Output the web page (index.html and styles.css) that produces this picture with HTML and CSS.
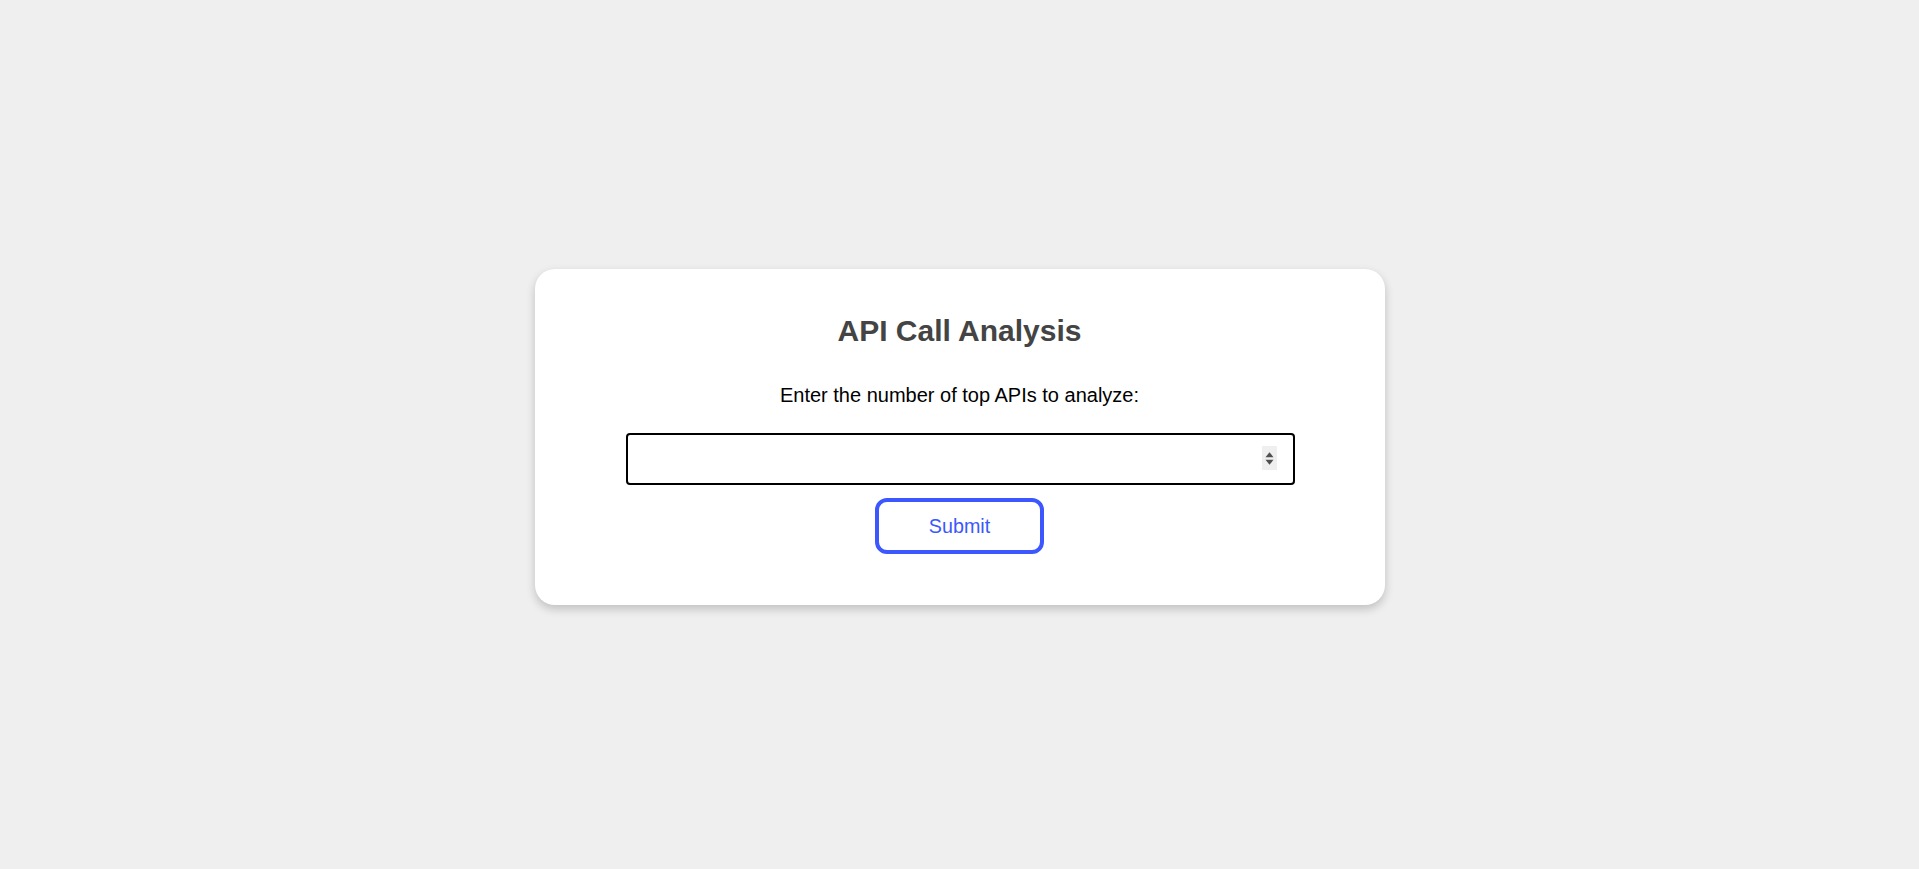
FILE: index.html
```html
<!DOCTYPE html>
<html lang="en">
<head>
<meta charset="utf-8">
<title>API Call Analysis</title>
<link rel="stylesheet" href="styles.css">
</head>
<body>
<main class="page">
  <form class="card" onsubmit="return false;">
    <h1 class="title">API Call Analysis</h1>
    <label class="label" for="topN">Enter the number of top APIs to analyze:</label>
    <div class="input-wrap">
      <input class="number-input" id="topN" type="number" min="1">
      <span class="spinner" aria-hidden="true">
        <svg width="15" height="24" viewBox="0 0 15 24">
          <path d="M3.5 11.2 L11.5 11.2 L7.5 6.2 Z" fill="#4f4f4f"/>
          <path d="M3.5 13.8 L11.5 13.8 L7.5 18.8 Z" fill="#4f4f4f"/>
        </svg>
      </span>
    </div>
    <button class="submit-btn" type="submit">Submit</button>
  </form>
</main>
</body>
</html>
```

FILE: styles.css
```css
html, body {
  margin: 0;
  padding: 0;
}

body {
  background: #efefef;
  font-family: "Liberation Sans", Arial, sans-serif;
}

.page {
  box-sizing: border-box;
  min-height: 869px;
  height: 100vh;
  padding-top: 5px;
  display: flex;
  align-items: center;
  justify-content: center;
}

.card {
  box-sizing: border-box;
  width: 850px;
  padding: 44px 40px 51px;
  background: #ffffff;
  border-radius: 20px;
  box-shadow: 0 4px 10px rgba(0, 0, 0, 0.2);
  display: flex;
  flex-direction: column;
  align-items: center;
}

.title {
  margin: 0 0 36px;
  font-size: 30px;
  line-height: 35px;
  font-weight: bold;
  color: #444444;
}

.label {
  display: block;
  margin: 0 0 26px;
  font-size: 20px;
  line-height: 23px;
  color: #000000;
}

.input-wrap {
  position: relative;
  width: 669px;
  height: 52px;
  margin-left: 2px;
}

.number-input {
  box-sizing: border-box;
  display: block;
  width: 100%;
  height: 52px;
  padding: 12px 36px 12px 12px;
  border: 2px solid #000000;
  border-radius: 4px;
  background: #ffffff;
  font-family: "Liberation Sans", Arial, sans-serif;
  font-size: 20px;
  outline: none;
  -moz-appearance: textfield;
}

.number-input::-webkit-inner-spin-button,
.number-input::-webkit-outer-spin-button {
  -webkit-appearance: none;
  margin: 0;
}

.spinner {
  position: absolute;
  top: 13px;
  right: 18px;
  width: 15px;
  height: 24px;
  background: #efefef;
  display: block;
  pointer-events: none;
}

.spinner svg {
  display: block;
}

.submit-btn {
  margin-top: 13px;
  padding: 12px 50px;
  border: 4px solid #3b57fd;
  border-radius: 12px;
  background: #ffffff;
  color: #3b57fd;
  font-family: "Liberation Sans", Arial, sans-serif;
  font-size: 19.7px;
  line-height: 24px;
  cursor: pointer;
}
```
